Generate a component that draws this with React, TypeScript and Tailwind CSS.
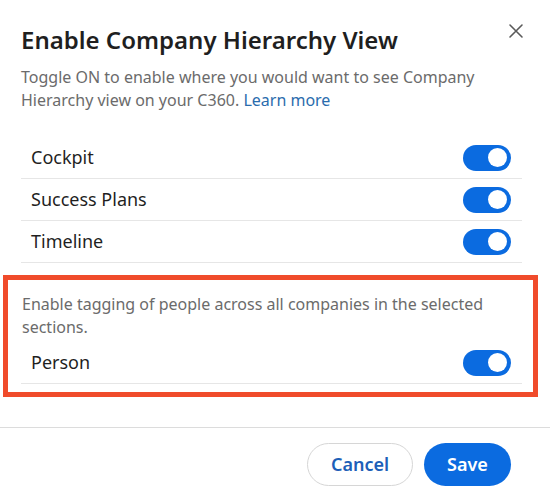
import React from "react";

type Section = {
  id: string;
  label: string;
  enabled: boolean;
};

const sections: Section[] = [
  { id: "cockpit", label: "Cockpit", enabled: true },
  { id: "success-plans", label: "Success Plans", enabled: true },
  { id: "timeline", label: "Timeline", enabled: true },
];

const Toggle: React.FC<{ on: boolean }> = ({ on }) => (
  <span
    className={
      on
        ? "flex h-[26px] w-[48px] items-center justify-end rounded-full bg-[#0b6be0] pr-[4px]"
        : "flex h-[26px] w-[48px] items-center justify-start rounded-full bg-[#c9ced6] pl-[4px]"
    }
  >
    <span className="h-[19px] w-[19px] rounded-full bg-white" />
  </span>
);

const ToggleRow: React.FC<{ label: string; on: boolean }> = ({ label, on }) => (
  <div className="flex h-[42px] items-center justify-between border-b border-[#e6e6e6] pl-[10px] pr-[11px]">
    <span className="text-[18px] text-[#1f1f1f]">{label}</span>
    <Toggle on={on} />
  </div>
);

export default function App() {
  return (
    <div className="relative h-[495px] w-[550px] bg-white font-['Noto_Sans',sans-serif]">
      {/* Close */}
      <button className="absolute right-[26px] top-[23px] text-[#5a5a5a]">
        <svg width="16" height="16" viewBox="0 0 16 16" fill="none">
          <path d="M2 2L14 14M14 2L2 14" stroke="currentColor" strokeWidth="1.6" strokeLinecap="round" />
        </svg>
      </button>

      <div className="pl-[21px] pr-[28px] pt-[24px]">
        <h2 className="text-[24px] font-semibold leading-[32px] text-[#1f1f1f]">
          Enable Company Hierarchy View
        </h2>
        <p className="mt-[10px] text-[16px] leading-[23px] text-[#6b6b6b]">
          Toggle ON to enable where you would want to see Company Hierarchy view on your C360.{" "}
          <a className="text-[#2a6cad]">Learn more</a>
        </p>

        {/* Sections */}
        <div className="mt-[25px]">
          {sections.map((s) => (
            <ToggleRow key={s.id} label={s.label} on={s.enabled} />
          ))}
        </div>

        {/* Highlighted people tagging */}
        <div className="-ml-[18px] -mr-[16px] mt-[12px] border-[5px] border-[#f04b2b] pb-[8px] pl-[13px] pr-[11px] pt-[13px]">
          <p className="pl-[1px] text-[16px] leading-[23px] text-[#6b6b6b]">
            Enable tagging of people across all companies in the selected sections.
          </p>
          <div className="mt-[3px]">
            <ToggleRow label="Person" on />
          </div>
        </div>
      </div>

      {/* Footer */}
      <div className="mt-[30px] flex justify-end gap-[11px] border-t border-[#dcdcdc] pr-[39px] pt-[15px]">
        <button className="h-[43px] w-[106px] rounded-full border border-[#d6d6d6] text-[18px] font-semibold text-[#1d5fb8]">
          Cancel
        </button>
        <button className="h-[43px] w-[87px] rounded-full bg-[#0b6be0] text-[18px] font-semibold text-white">
          Save
        </button>
      </div>
    </div>
  );
}
